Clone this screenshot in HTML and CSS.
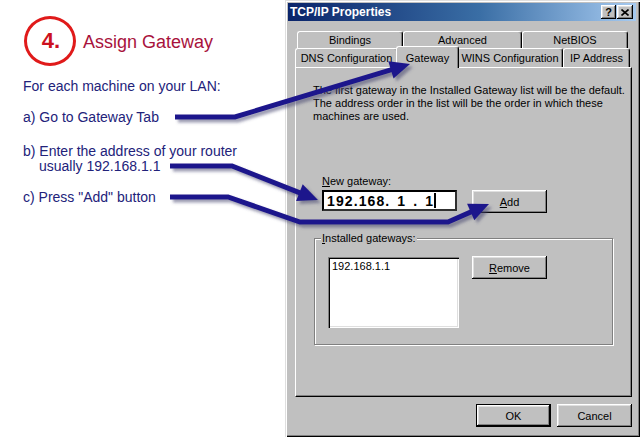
FILE: index.html
```html
<!DOCTYPE html>
<html lang="en">
<head>
<meta charset="utf-8">
<title>Assign Gateway</title>
<link rel="stylesheet" href="styles.css">
</head>
<body>
<div class="page">
  <section class="guide">
    <div class="heading">
      <span class="step-num">4.</span>
      <h1>Assign Gateway</h1>
    </div>
    <p class="lead">For each machine on your LAN:</p>
    <ul class="steps">
      <li class="step step-a">a) Go to Gateway Tab</li>
      <li class="step step-b">b) Enter the address of your router<br><span class="indent">usually 192.168.1.1</span></li>
      <li class="step step-c">c) Press "Add" button</li>
    </ul>
  </section>

  <div class="dialog">
    <div class="titlebar">
      <span class="title">TCP/IP Properties</span>
      <span class="caption-btns">
        <span class="cbtn help">?</span>
        <span class="cbtn close"><svg width="8" height="7" viewBox="0 0 8 7"><path d="M0.5 0.5 L7.5 6.5 M7.5 0.5 L0.5 6.5" stroke="#000" stroke-width="1.6" fill="none"/></svg></span>
      </span>
    </div>
    <div class="body">
      <div class="tabrow back">
        <span class="tab t-bind">Bindings</span>
        <span class="tab t-adv">Advanced</span>
        <span class="tab t-net">NetBIOS</span>
      </div>
      <div class="tabrow front">
        <span class="tab t-dns">DNS Configuration</span>
        <span class="tab t-gw selected">Gateway</span>
        <span class="tab t-wins">WINS Configuration</span>
        <span class="tab t-ip">IP Address</span>
      </div>
      <div class="panel">
        <p class="intro">The first gateway in the Installed Gateway list will be the default.<br>The address order in the list will be the order in which these<br>machines are used.</p>
        <div class="field-label"><u>N</u>ew gateway:</div>
        <div class="input-row">
          <div class="ip"><span class="ip-text">192.168. 1 . 1</span><span class="caret"></span></div>
          <button class="btn" type="button"><u>A</u>dd</button>
        </div>
        <fieldset class="group">
          <legend><u>I</u>nstalled gateways:</legend>
          <div class="group-row">
            <div class="listbox">192.168.1.1</div>
            <button class="btn remove" type="button"><u>R</u>emove</button>
          </div>
        </fieldset>
      </div>
      <div class="actions">
        <button class="btn default" type="button">OK</button>
        <button class="btn" type="button">Cancel</button>
      </div>
    </div>
  </div>

  <svg class="arrows" width="640" height="437" viewBox="0 0 640 437" aria-hidden="true">
    <defs>
      <filter id="sh" x="-20%" y="-20%" width="140%" height="160%">
        <feDropShadow dx="3" dy="3" stdDeviation="1.6" flood-color="#4a4a70" flood-opacity="0.55"/>
      </filter>
    </defs>
    <g filter="url(#sh)" class="arrow">
      <path d="M175 117 L235 117 L396.6 68.1" />
      <polygon points="410,64 393.5,78.4 388.3,61.2" />
    </g>
    <g filter="url(#sh)" class="arrow">
      <path d="M170 166 L232 166 L305 194.8" />
      <polygon points="318,200 296.1,201 302.7,184.2" />
    </g>
    <g filter="url(#sh)" class="arrow">
      <path d="M170 197 L228 197 L300 222 L448 222 L476.2 209.6" />
      <polygon points="489,204 474.3,220.2 467.1,203.8" />
    </g>
  </svg>
</div>
</body>
</html>
```
FILE: styles.css
```css
html, body {
  margin: 0;
  padding: 0;
  background: #fff;
}
body {
  width: 640px;
  height: 437px;
  overflow: hidden;
  font-family: "Liberation Sans", Arial, sans-serif;
}
.page {
  position: relative;
  display: flex;
  width: 640px;
  height: 437px;
}

/* ---------- left guide ---------- */
.guide {
  width: 285px;
  flex: none;
  box-sizing: border-box;
  padding: 16px 0 0 24px;
  color: #22227a;
  font-size: 14px;
}
.heading {
  display: flex;
  align-items: center;
  gap: 7px;
}
.step-num {
  box-sizing: border-box;
  width: 52px;
  height: 50px;
  border: 3px solid #e01a1a;
  border-radius: 50%;
  display: flex;
  align-items: center;
  justify-content: center;
  color: #cc1020;
  font-weight: bold;
  font-size: 22px;
  padding-left: 2px;
}
.heading h1 {
  margin: 2px 0 0 0;
  font-size: 18px;
  font-weight: normal;
  color: #a8123c;
}
.lead {
  margin: 13px 0 0 -1px;
  line-height: 15px;
}
.steps {
  list-style: none;
  margin: 16px 0 0 -1px;
  padding: 0;
  line-height: 15px;
}
.step-b { margin-top: 19px; }
.step-c { margin-top: 16px; }
.indent { padding-left: 16px; }

/* ---------- dialog ---------- */
.dialog {
  width: 355px;
  height: 437px;
  flex: none;
  box-sizing: border-box;
  background: #c0c0c0;
  padding: 3px 4px 0 3px;
  box-shadow: inset 1px 1px 0 #dfdfdf, inset 2px 2px 0 #fff,
              inset -1px -1px 0 #000, inset -2px -2px 0 #808080;
  font-size: 11px;
  color: #000;
  display: flex;
  flex-direction: column;
}
.titlebar {
  height: 18px;
  flex: none;
  background: linear-gradient(90deg, #0a246a 0%, #3a6ea5 55%, #a6caf0 100%);
  display: flex;
  align-items: center;
  justify-content: space-between;
  padding: 0 3px 0 2px;
  color: #fff;
  font-weight: bold;
  font-size: 12px;
}
.caption-btns {
  display: flex;
}
.cbtn {
  box-sizing: border-box;
  width: 16px;
  height: 14px;
  background: #c0c0c0;
  box-shadow: inset -1px -1px 0 #000, inset 1px 1px 0 #fff,
              inset -2px -2px 0 #808080, inset 2px 2px 0 #dfdfdf;
  display: flex;
  align-items: center;
  justify-content: center;
  color: #000;
  font-weight: bold;
  font-size: 11px;
}
.cbtn.help { width: 15px; margin-right: 1px; }

.body {
  margin: 10px 4px 0 7px;
  display: flex;
  flex-direction: column;
}
.tabrow {
  display: flex;
  flex: none;
}
.tabrow.back {
  height: 17px;
  padding-left: 2px;
}
.tabrow.front {
  height: 19px;
}
.tab {
  box-sizing: border-box;
  height: 100%;
  background: #c0c0c0;
  border-top: 1px solid #fff;
  border-left: 1px solid #fff;
  border-right: 1px solid #000;
  border-radius: 3px 3px 0 0;
  box-shadow: inset -1px 0 0 #808080;
  display: flex;
  align-items: center;
  justify-content: center;
  white-space: nowrap;
}
.t-bind { width: 106px; }
.t-adv { width: 119px; }
.t-net { width: 106px; }
.t-dns { width: 103px; }
.t-gw { width: 63px; }
.t-wins { width: 106px; }
.t-ip { width: 67px; }
.tab.selected {
  position: relative;
  z-index: 2;
  height: 22px;
  margin: -2px -2px 0 -2px;
}

.panel {
  height: 330px;
  flex: none;
  box-sizing: border-box;
  border-top: 1px solid #fff;
  border-left: 1px solid #fff;
  border-right: 1px solid #000;
  border-bottom: 1px solid #000;
  box-shadow: inset -1px -1px 0 #808080;
  padding: 16px 17px 0 17px;
  display: flex;
  flex-direction: column;
}
.intro {
  margin: 0;
  line-height: 13px;
  white-space: nowrap;
}
.field-label {
  margin: 52px 0 0 9px;
  line-height: 13px;
}
.input-row {
  display: flex;
  align-items: flex-start;
  gap: 15px;
  margin: 2px 0 0 9px;
}
.ip {
  box-sizing: border-box;
  width: 135px;
  height: 21px;
  background: #fff;
  border: 2px solid;
  border-color: #000 #303030 #303030 #000;
  display: flex;
  align-items: center;
  padding-left: 3px;
}
.ip-text {
  font-family: "Liberation Sans", Arial, sans-serif;
  font-weight: bold;
  font-size: 14px;
  letter-spacing: 1.1px;
  word-spacing: 2px;
  white-space: pre;
}
.caret {
  width: 2px;
  height: 15px;
  background: #000;
  margin-left: 0;
}
.btn {
  box-sizing: border-box;
  width: 75px;
  height: 23px;
  padding: 0;
  border: none;
  background: #c0c0c0;
  box-shadow: inset -1px -1px 0 #000, inset 1px 1px 0 #fff,
              inset -2px -2px 0 #808080, inset 2px 2px 0 #dfdfdf;
  font-family: "Liberation Sans", Arial, sans-serif;
  font-size: 11px;
  color: #000;
}
.btn.default {
  border: 1px solid #000;
}

.group {
  margin: 19px 1px 0 1px;
  padding: 12px 13px 16px 13px;
  min-width: 0;
  border: 1px solid #808080;
  box-shadow: inset 1px 1px 0 #fff, 1px 1px 0 #fff;
}
.group legend {
  padding: 0 1px;
  margin-left: -7px;
  line-height: 13px;
  background: #c0c0c0;
}
.group-row {
  display: flex;
  align-items: flex-start;
  gap: 13px;
}
.listbox {
  box-sizing: border-box;
  width: 131px;
  height: 71px;
  background: #fff;
  box-shadow: inset 1px 1px 0 #808080, inset 2px 2px 0 #000,
              inset -1px -1px 0 #fff, inset -2px -2px 0 #dfdfdf;
  padding: 3px 4px;
  line-height: 13px;
}
.btn.remove {
  margin-top: -1px;
}

.actions {
  display: flex;
  justify-content: flex-end;
  gap: 6px;
  margin-top: 7px;
}

/* ---------- arrows overlay ---------- */
.arrows {
  position: absolute;
  left: 0;
  top: 0;
  pointer-events: none;
  z-index: 5;
}
.arrow path {
  fill: none;
  stroke: #1e168c;
  stroke-width: 5;
  stroke-linejoin: miter;
}
.arrow polygon {
  fill: #1e168c;
}
```
